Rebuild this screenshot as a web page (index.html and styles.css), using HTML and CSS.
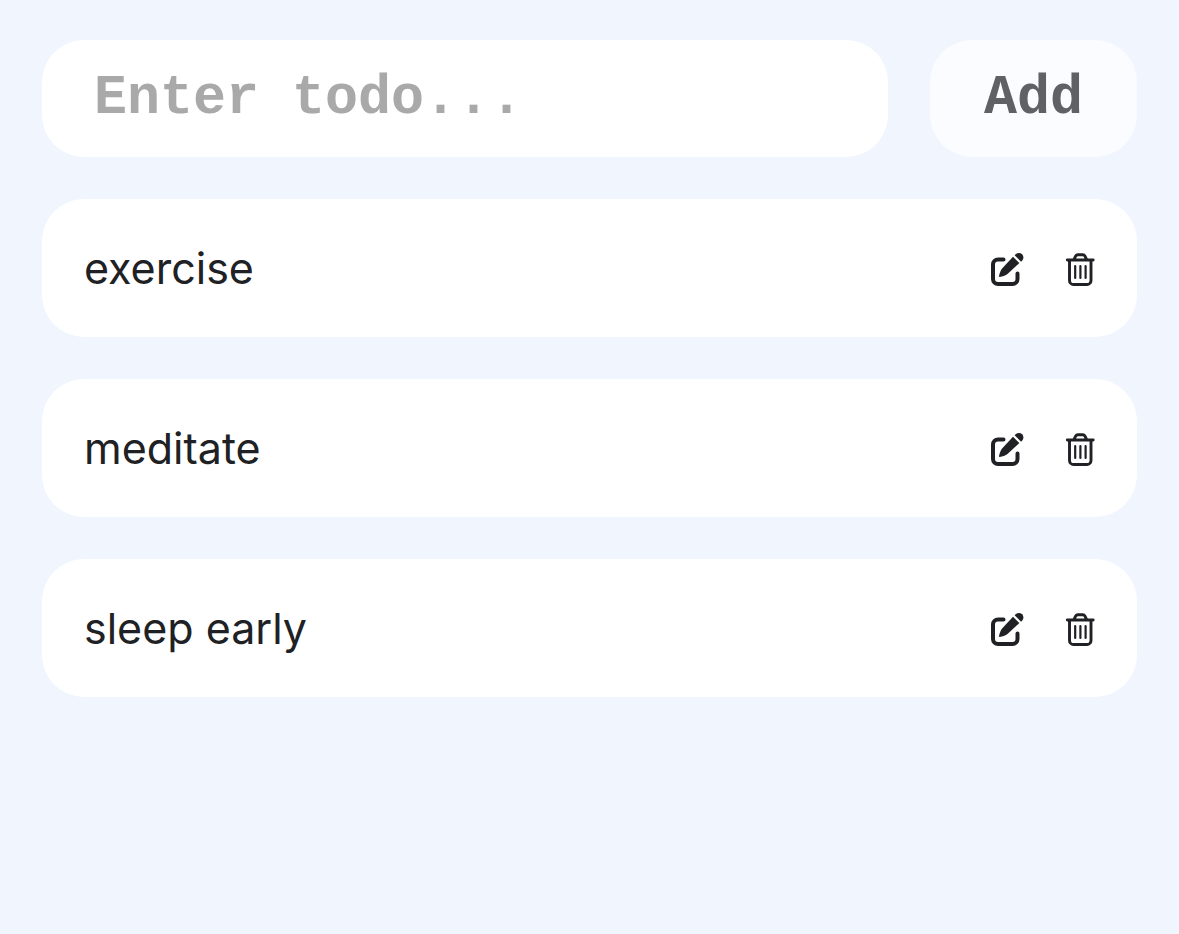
FILE: index.html
```html
<!DOCTYPE html>
<html lang="en">
<head>
<meta charset="utf-8">
<meta name="viewport" content="width=device-width, initial-scale=1">
<title>Todos</title>
<link rel="stylesheet" href="styles.css">
</head>
<body>
<svg class="sprite" aria-hidden="true">
  <symbol id="edit" viewBox="0 0 34 34">
    <path d="M12.500 7.500H7a5 5 0 0 0-5 5V27a5 5 0 0 0 5 5h14.500a5 5 0 0 0 5-5v-5.500" fill="none" stroke="currentColor" stroke-width="4" stroke-linecap="round"/>
    <path d="M22 4.800l6.300 6.300L16.500 22c-1.800 1.600-5.400 2.600-7.600 3-.7.100-1-.3-.9-.9.500-2.400 1.600-5.700 3.100-7.500z" fill="currentColor"/>
    <path d="M23.700 3.300l1-1a4.600 4.600 0 0 1 6.400 0 4.600 4.600 0 0 1 0 6.400l-1.100 1z" fill="currentColor"/>
  </symbol>
  <symbol id="trash" viewBox="0 0 30 34">
    <g fill="none" stroke="currentColor" stroke-linecap="round" stroke-linejoin="round">
      <path d="M2.300 8h25.900M9 7.500l1.600-3.300c.5-1 1.200-1.500 2.300-1.500h4.800c1.100 0 1.800.5 2.300 1.500l1.600 3.300M4.500 8.500v20a4 4 0 0 0 4 4H22a4 4 0 0 0 4-4v-20" stroke-width="2.900"/>
      <path d="M10.200 14v12M15.400 14v12M20.600 14v12" stroke-width="2.200"/>
    </g>
  </symbol>
</svg>
<main class="app">
  <form class="entry">
    <input class="entry-text" type="text" placeholder="Enter todo..." aria-label="New todo">
    <button class="entry-add" type="button">Add</button>
  </form>
  <ul class="todos">
    <li class="todo"><span class="todo-name">exercise</span><button class="icon-button" type="button" aria-label="Edit exercise"><svg class="icon-edit"><use href="#edit"/></svg></button><button class="icon-button" type="button" aria-label="Delete exercise"><svg class="icon-trash"><use href="#trash"/></svg></button></li>
    <li class="todo"><span class="todo-name">meditate</span><button class="icon-button" type="button" aria-label="Edit meditate"><svg class="icon-edit"><use href="#edit"/></svg></button><button class="icon-button" type="button" aria-label="Delete meditate"><svg class="icon-trash"><use href="#trash"/></svg></button></li>
    <li class="todo"><span class="todo-name">sleep early</span><button class="icon-button" type="button" aria-label="Edit sleep early"><svg class="icon-edit"><use href="#edit"/></svg></button><button class="icon-button" type="button" aria-label="Delete sleep early"><svg class="icon-trash"><use href="#trash"/></svg></button></li>
  </ul>
</main>
</body>
</html>
```
FILE: styles.css
```css
* { box-sizing: border-box; }
body { margin: 0; background: #f0f5fe; color: #202124; font-family: Inter, sans-serif; }
.sprite { position: absolute; width: 0; height: 0; }
.app { padding: 40px 42px; }
.entry { display: flex; gap: 42px; }
.entry-text, .entry-add { height: 117px; border: 0; border-radius: 42px; font: 700 55px/60px "Liberation Mono", monospace; }
.entry-text { flex: 1; min-width: 0; padding: 0 52px; background: #fff; color: #202124; }
.entry-text::placeholder { color: #a9a9a9; opacity: 1; }
.entry-add { flex: none; padding: 0 54px; background: #fafcff; color: #5f6165; }
.todos { display: grid; gap: 42px; margin: 42px 0 0; padding: 0; list-style: none; }
.todo { display: flex; align-items: center; gap: 40px; min-height: 138px; padding: 42px; border-radius: 42px; background: #fff; }
.todo-name { flex: 1; font-size: 43px; line-height: 54px; }
.icon-button { display: flex; padding: 2px 0 0; border: 0; background: none; color: #202124; }
.icon-edit { width: 34px; height: 34px; }
.icon-trash { width: 30px; height: 34px; }
```
